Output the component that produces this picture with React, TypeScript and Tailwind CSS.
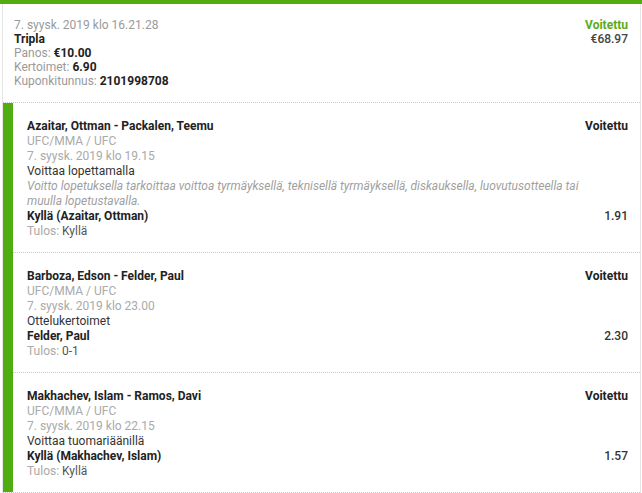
import React from "react";

type Leg = {
  title: string;
  market: string;
  note?: string;
  selection: string;
  odds: string;
  result: string;
  date: string;
};

const legs: Leg[] = [
  {
    title: "Azaitar, Ottman - Packalen, Teemu",
    date: "7. syysk. 2019 klo 19.15",
    market: "Voittaa lopettamalla",
    note:
      "Voitto lopetuksella tarkoittaa voittoa tyrmäyksellä, teknisellä tyrmäyksellä, diskauksella, luovutusotteella tai muulla lopetustavalla.",
    selection: "Kyllä (Azaitar, Ottman)",
    odds: "1.91",
    result: "Kyllä",
  },
  {
    title: "Barboza, Edson - Felder, Paul",
    date: "7. syysk. 2019 klo 23.00",
    market: "Ottelukertoimet",
    selection: "Felder, Paul",
    odds: "2.30",
    result: "0-1",
  },
  {
    title: "Makhachev, Islam - Ramos, Davi",
    date: "7. syysk. 2019 klo 22.15",
    market: "Voittaa tuomariäänillä",
    selection: "Kyllä (Makhachev, Islam)",
    odds: "1.57",
    result: "Kyllä",
  },
];

export default function App() {
  return (
    <div
      className="w-[642px] h-[493px] overflow-hidden bg-white text-[12px] text-[#333]"
      style={{ fontFamily: "Roboto, 'Noto Sans', Arial, sans-serif" }}
    >
      <div className="h-[4px] bg-[#4fad12]" />
      <div className="ml-[2px] w-[639px] border-x border-[#e6e6e6]">
        {/* Header */}
        <div className="flex justify-between pl-[11px] pr-[12px] pt-[14px] pb-[14px] leading-[14px]">
          <div>
            <div className="text-[#9a9a9a]">7. syysk. 2019 klo 16.21.28</div>
            <div className="font-bold text-[#222]">Tripla</div>
            <div className="text-[#9a9a9a]">
              Panos: <span className="font-bold text-[#222]">€10.00</span>
            </div>
            <div className="text-[#9a9a9a]">
              Kertoimet: <span className="font-bold text-[#222]">6.90</span>
            </div>
            <div className="text-[#9a9a9a]">
              Kuponkitunnus: <span className="font-bold text-[#222]">2101998708</span>
            </div>
          </div>
          <div className="text-right">
            <div className="font-bold text-[#5aab1c]">Voitettu</div>
            <div className="font-medium text-[#444]">€68.97</div>
          </div>
        </div>

        {/* Legs */}
        <div className="flex border-y border-dotted border-[#c8c8c8]">
          <div className="w-[10px] shrink-0 bg-[#4fad12]" />
          <div className="flex-1">
            {legs.map((leg, i) => (
              <div
                key={i}
                className={
                  "pl-[14px] pr-[12px] pt-[16px] pb-[13px] leading-[15px] " +
                  (i > 0 ? "border-t border-dotted border-[#c8c8c8]" : "")
                }
              >
                <div className="flex justify-between">
                  <span className="font-bold text-[#222]">{leg.title}</span>
                  <span className="font-bold text-[#222]">Voitettu</span>
                </div>
                <div className="text-[#aaaaaa]">UFC/MMA / UFC</div>
                <div className="text-[#aaaaaa]">{leg.date}</div>
                <div className="text-[#333]">{leg.market}</div>
                {leg.note && (
                  <div className="italic text-[#a0a0a0] pr-[30px]">{leg.note}</div>
                )}
                <div className="flex justify-between">
                  <span className="font-bold text-[#222]">{leg.selection}</span>
                  <span className="font-medium text-[#333]">{leg.odds}</span>
                </div>
                <div className="text-[#aaaaaa]">
                  Tulos: <span className="text-[#555]">{leg.result}</span>
                </div>
              </div>
            ))}
          </div>
        </div>
      </div>
    </div>
  );
}
